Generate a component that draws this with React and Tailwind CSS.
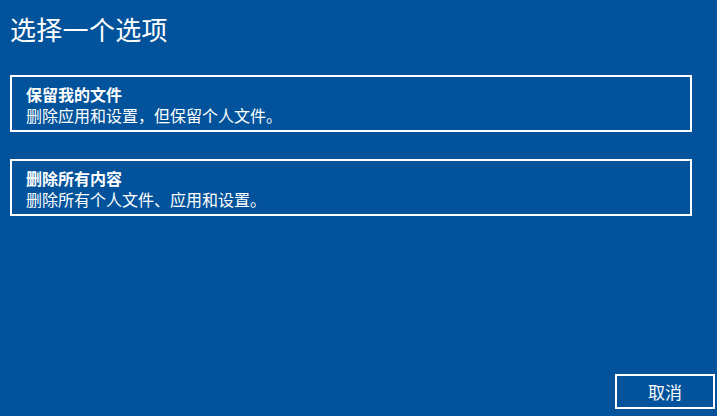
export default function App() {
  const font = { fontFamily: '"Noto Sans CJK SC", "Noto Sans", sans-serif' };
  return (
    <div className="h-[416px] w-full bg-[#02539b] text-white flex flex-col overflow-hidden" style={font}>
      <div className="pl-[10px] pt-[13px] text-[26px] leading-[32px] font-normal tracking-[0.3px]">选择一个选项</div>
      <div className="mt-[30px] ml-[10px] mr-[25px] flex flex-col gap-[27px]">
        <div className="border-2 border-white pl-[14px] pt-[7px] pb-[3px] h-[57px]">
          <div className="text-[16px] leading-[21px] font-bold">保留我的文件</div>
          <div className="text-[16px] leading-[21px]">删除应用和设置，但保留个人文件。</div>
        </div>
        <div className="border-2 border-white pl-[14px] pt-[7px] pb-[3px] h-[57px]">
          <div className="text-[16px] leading-[21px] font-bold">删除所有内容</div>
          <div className="text-[16px] leading-[21px]">删除所有个人文件、应用和设置。</div>
        </div>
      </div>
      <div className="mt-auto flex justify-end pr-[2px] pb-[7px]">
        <div className="w-[100px] h-[35px] border-2 border-white flex items-center justify-center text-[17px]">取消</div>
      </div>
    </div>
  );
}
